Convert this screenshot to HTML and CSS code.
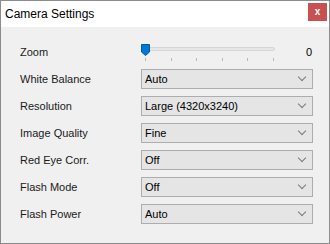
FILE: index.html
```html
<!DOCTYPE html>
<html lang="en">
<head>
    <meta charset="UTF-8">
    <title>Camera Settings</title>
    <link rel="stylesheet" href="styles.css">
</head>
<body>
    <div class="window">
        <div class="titlebar">
            <span class="title">Camera Settings</span>
            <button class="close">x</button>
        </div>
        <div class="content">
            <div class="row">
                <label>Zoom</label>
                <div class="slider-wrap">
                    <div class="slider">
                        <div class="track"></div>
                        <svg class="thumb" width="9" height="12" viewBox="0 0 9 12">
                            <path d="M0.5 0.5 H8.5 V8 L4.5 11.5 L0.5 8 Z" fill="#0078d7" stroke="#005a9e"/>
                        </svg>
                        <div class="ticks">
                            <span></span><span></span><span></span><span></span><span></span><span></span>
                        </div>
                    </div>
                    <span class="value">0</span>
                </div>
            </div>
            <div class="row">
                <label>White Balance</label>
                <div class="select"><span>Auto</span><i class="chev"></i></div>
            </div>
            <div class="row">
                <label>Resolution</label>
                <div class="select"><span>Large (4320x3240)</span><i class="chev"></i></div>
            </div>
            <div class="row">
                <label>Image Quality</label>
                <div class="select"><span>Fine</span><i class="chev"></i></div>
            </div>
            <div class="row">
                <label>Red Eye Corr.</label>
                <div class="select"><span>Off</span><i class="chev"></i></div>
            </div>
            <div class="row">
                <label>Flash Mode</label>
                <div class="select"><span>Off</span><i class="chev"></i></div>
            </div>
            <div class="row">
                <label>Flash Power</label>
                <div class="select"><span>Auto</span><i class="chev"></i></div>
            </div>
        </div>
    </div>
</body>
</html>
```

FILE: styles.css
```css
* {
    box-sizing: border-box;
}
body {
    margin: 0;
    font-family: 'Liberation Sans', Arial, sans-serif;
    font-size: 11px;
    color: #000;
}
.window {
    width: 330px;
    height: 244px;
    border: 1px solid #8c8c8c;
    background: #f0f0f0;
    display: flex;
    flex-direction: column;
}
.titlebar {
    height: 26px;
    background: white;
    display: flex;
    align-items: center;
    justify-content: space-between;
    padding-left: 4px;
}
.title {
    font-size: 12px;
    margin-top: -1px;
}
.close {
    width: 19px;
    height: 18px;
    margin: -5px 2px 0 0;
    border: none;
    padding: 0;
    background: #c75050;
    color: white;
    font-family: 'Liberation Sans', Arial, sans-serif;
    font-size: 10px;
    font-weight: bold;
    line-height: 16px;
}
.content {
    padding: 11px 15px 0 19px;
}
.row {
    height: 27px;
    display: grid;
    grid-template-columns: 121px 172px;
    align-items: center;
}
.row label {
    color: #1a1a1a;
}
.select {
    height: 20px;
    background: #e5e5e5;
    border: 1px solid #adadad;
    display: flex;
    align-items: center;
    justify-content: space-between;
    padding: 0 7px 0 3px;
}
.chev {
    width: 6px;
    height: 6px;
    border-right: 1px solid #7a7a7a;
    border-bottom: 1px solid #7a7a7a;
    transform: rotate(45deg);
    margin-top: -4px;
}
.slider-wrap {
    display: flex;
    align-items: center;
    justify-content: space-between;
    height: 27px;
}
.slider {
    position: relative;
    width: 134px;
    height: 27px;
}
.track {
    position: absolute;
    left: 1px;
    right: 0;
    top: 9px;
    height: 4px;
    background: #e7e7e7;
    border: 1px solid #d6d6d6;
    border-radius: 2px;
}
.thumb {
    position: absolute;
    left: 0;
    top: 6px;
}
.ticks {
    position: absolute;
    left: 4px;
    right: 1px;
    top: 20px;
    display: flex;
    justify-content: space-between;
}
.ticks span {
    width: 1px;
    height: 3px;
    background: #b8b8b8;
}
.value {
    margin-right: 1px;
}
```
